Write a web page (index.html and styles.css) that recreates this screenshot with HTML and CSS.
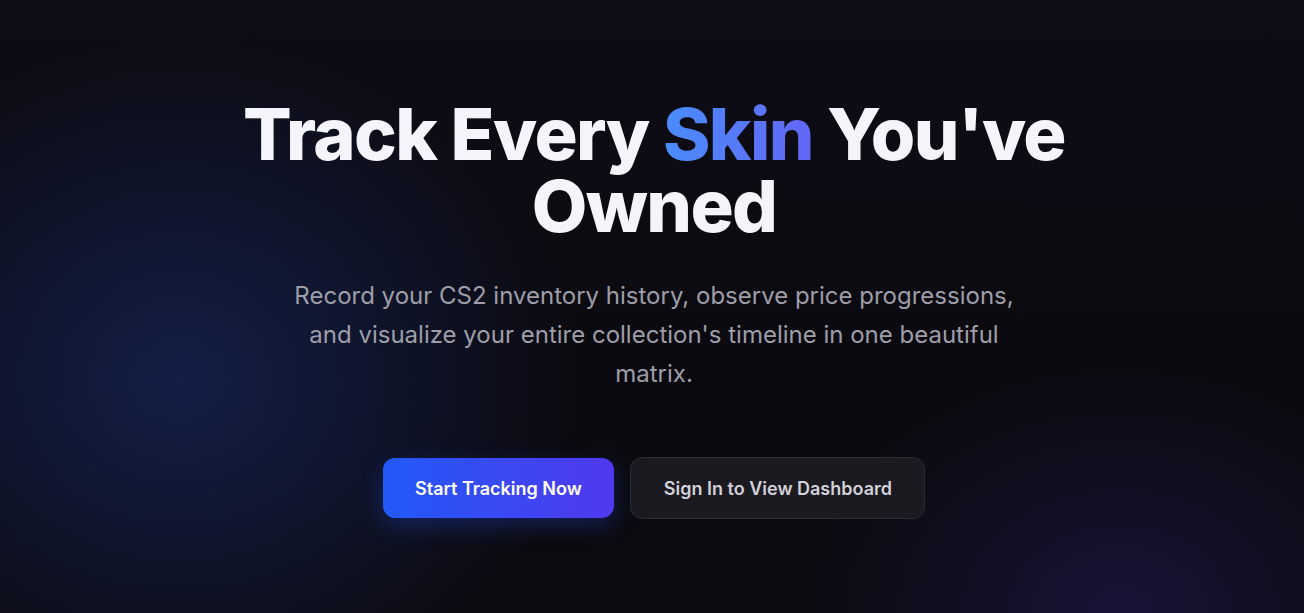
FILE: index.html
```html
<!DOCTYPE html>
<html lang="en">
<head>
<meta charset="utf-8">
<title>Track Every Skin</title>
<link rel="stylesheet" href="styles.css">
</head>
<body>
<main class="hero">
  <div class="glow glow-blue"></div>
  <div class="glow glow-purple"></div>
  <section class="content">
    <h1 class="title">Track Every <span class="accent">Skin</span> You've Owned</h1>
    <p class="lead">Record your CS2 inventory history, observe price progressions, and visualize your entire collection's timeline in one beautiful matrix.</p>
    <div class="actions">
      <a class="btn btn-primary" href="#">Start Tracking Now</a>
      <a class="btn btn-secondary" href="#">Sign In to View Dashboard</a>
    </div>
  </section>
</main>
</body>
</html>
```

FILE: styles.css
```css
* { box-sizing: border-box; }
html, body { margin: 0; padding: 0; }
body {
  background: #0b0a10;
  font-family: Inter, "Noto Sans", sans-serif;
  color: #f4f4f8;
  overflow: hidden;
}
.hero {
  position: relative;
  width: 1304px;
  height: 613px;
  overflow: hidden;
  background: linear-gradient(180deg, #0e0d16 0%, #0b0a10 60%, #0c0b11 100%);
}
.glow {
  position: absolute;
  border-radius: 50%;
  pointer-events: none;
}
.glow-blue {
  left: -220px;
  top: 40px;
  width: 800px;
  height: 680px;
  background: radial-gradient(closest-side, rgba(24, 44, 105, 0.62), rgba(24, 44, 105, 0.3) 50%, rgba(24, 44, 105, 0) 100%);
}
.glow-purple {
  left: 800px;
  top: 360px;
  width: 640px;
  height: 500px;
  background: radial-gradient(closest-side, rgba(40, 26, 92, 0.5), rgba(40, 26, 92, 0.2) 55%, rgba(40, 26, 92, 0) 100%);
}
.content {
  position: relative;
  display: flex;
  flex-direction: column;
  align-items: center;
  padding-top: 98px;
  padding-left: 4px;
  text-align: center;
}
.title {
  margin: 0;
  max-width: 900px;
  font-size: 72px;
  line-height: 72px;
  font-weight: 800;
  letter-spacing: -0.022em;
  color: #f5f4fa;
}
.accent {
  background: linear-gradient(90deg, #4a8dfb, #6366f6);
  -webkit-background-clip: text;
  background-clip: text;
  color: transparent;
}
.lead {
  margin: 34px 0 0;
  max-width: 740px;
  font-size: 24px;
  line-height: 39px;
  font-weight: 400;
  color: #9e9ea8;
}
.actions {
  display: flex;
  gap: 16px;
  margin-top: 64px;
  align-items: center;
}
.btn {
  display: inline-flex;
  align-items: center;
  justify-content: center;
  text-decoration: none;
  font-size: 18px;
  font-weight: 600;
  border-radius: 12px;
  height: 60px;
  padding: 0 32.5px;
}
.btn-primary {
  background: linear-gradient(90deg, #2259f8, #5039ee);
  color: #ffffff;
  box-shadow: 0 8px 22px rgba(37, 80, 235, 0.3);
}
.btn-secondary {
  height: 62px;
  background: #1b1a21;
  border: 1px solid #2c2b33;
  color: #d2d1da;
}
```
